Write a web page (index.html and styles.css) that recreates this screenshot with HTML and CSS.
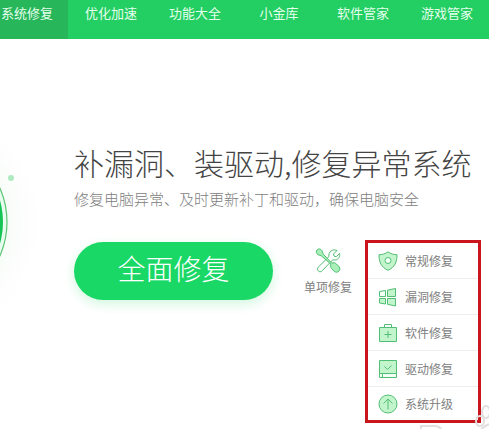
FILE: index.html
```html
<!DOCTYPE html>
<html lang="zh-CN">
<head>
    <meta charset="UTF-8">
    <meta name="viewport" content="width=device-width, initial-scale=1.0">
    <title>系统修复</title>
    <link rel="stylesheet" href="styles.css">
</head>
<body>

    <nav class="nav">
        <a class="nav-item active" href="#">系统修复</a>
        <a class="nav-item" href="#">优化加速</a>
        <a class="nav-item" href="#">功能大全</a>
        <a class="nav-item" href="#">小金库</a>
        <a class="nav-item" href="#">软件管家</a>
        <a class="nav-item" href="#">游戏管家</a>
    </nav>

    <main class="hero">
        <svg class="dial" width="74" height="220" viewBox="0 0 74 220" aria-hidden="true">
            <defs>
                <radialGradient id="halo">
                    <stop offset="0.7" stop-color="#f7fdf9"/>
                    <stop offset="0.85" stop-color="#fcfdfc"/>
                    <stop offset="1" stop-color="#ffffff"/>
                </radialGradient>
            </defs>
            <circle cx="-77" cy="102" r="118" fill="url(#halo)"/>
            <circle cx="-77" cy="102" r="84" fill="#e9fcf0" stroke="#5cc474" stroke-width="1.2"/>
            <circle cx="-77" cy="102" r="80" fill="#14c455"/>
            <circle cx="11" cy="58" r="3" fill="#aeeac0"/>
        </svg>

        <div class="content">
            <h1 class="title">补漏洞、装驱动,修复异常系统</h1>
            <p class="subtitle">修复电脑异常、及时更新补丁和驱动，确保电脑安全</p>

            <div class="actions">
                <button class="btn-repair" type="button">全面修复</button>

                <button class="btn-single" type="button">
                    <svg width="26" height="26" viewBox="0 0 26 26" fill="none" stroke="#4fbd70" stroke-linejoin="round">
                        <path d="M22 2.5 18.5 6l.6 2.2 2.3.5 3.2-3.4c.7 3-1 6.300-4.300 6.700-1 .1-1.800 0-2.500-.3L7.300 22.700c-2.600 2.800-6.500-.6-4-3.600L14 8.500C13 4 17.500.5 22 2.500z"/>
                        <path d="M2.200 1.700C3.500.4 5.800.8 6.800 2.400l1.500 3.800 8.500 9c1.500-.8 3.500-.4 4.700.8l2.600 2.800c2.400 3-1.600 7.200-4.800 4.600l-2.700-2.800c-1.200-1.300-1.500-3-.7-4.500L6.500 8 3.200 6.700C1.200 5.800.8 3.200 2.200 1.700z" fill="#a8efb9"/>
                    </svg>
                    <span>单项修复</span>
                </button>

                <ul class="menu">
                    <li>
                        <a class="menu-item" href="#">
                            <svg class="icon" viewBox="0 0 20 20">
                                <path d="M10 .8C7.500 2.700 4.500 3.700 1 3.700 .8 11 3.500 16.500 10 19.300 16.500 16.500 19.200 11 19 3.700 15.500 3.700 12.500 2.700 10 .8z"/>
                                <circle class="light" cx="10" cy="9.500" r="3"/>
                            </svg>
                            常规修复
                        </a>
                    </li>
                    <li>
                        <a class="menu-item" href="#">
                            <svg class="icon" viewBox="0 0 20 20">
                                <path class="light" d="M1.500 4.500 7.500 3.500V9.500h-6z"/>
                                <path d="M9.500 3.200 17.500 1.500V9.500h-8zM1.500 11.500h6v5.500l-6-1zM9.500 11.500h8v7.500l-8-1.700z"/>
                            </svg>
                            漏洞修复
                        </a>
                    </li>
                    <li>
                        <a class="menu-item" href="#">
                            <svg class="icon" viewBox="0 0 20 20">
                                <path class="hollow" d="M6.500 4.500v-3h7v3"/>
                                <path d="M1.500 4.500h17v14h-17z"/>
                                <path d="M6.500 11.500h7M10 8v7"/>
                            </svg>
                            软件修复
                        </a>
                    </li>
                    <li>
                        <a class="menu-item" href="#">
                            <svg class="icon" viewBox="0 0 20 20">
                                <path d="M1.500 1.500h17v13h-17z"/>
                                <path class="light" d="M1.500 14.500h17v4h-17zM4.500 14.500v4"/>
                                <path class="hollow" d="M6.500 7.500 9.500 10.500 13.500 6.500"/>
                            </svg>
                            驱动修复
                        </a>
                    </li>
                    <li>
                        <a class="menu-item" href="#">
                            <svg class="icon" viewBox="0 0 20 20">
                                <circle cx="10" cy="10" r="9"/>
                                <path class="hollow" d="M10 15.500V5M5.500 9.500 10 5l4.500 4.500"/>
                            </svg>
                            系统升级
                        </a>
                    </li>
                </ul>
            </div>
        </div>
    </main>

    <!-- 右下角水印 -->
    <svg class="watermark" width="72" height="24" viewBox="0 0 72 24" aria-hidden="true">
        <path d="M4 30V21h14q7 0 8 9M34 30q3-5 10-3"/>
        <ellipse cx="69" cy="7" rx="4" ry="6"/>
        <ellipse cx="63" cy="16" rx="4" ry="5"/>
        <path d="M62 28q4-8 12-9"/>
    </svg>

</body>
</html>
```
FILE: styles.css
```css
/* 全局样式 */
* {
    box-sizing: border-box;
}
body {
    margin: 0;
    background: #fff;
    color: #808080;
    font-family: "Liberation Sans", "Noto Sans CJK SC", sans-serif;
    font-size: 12px;
    overflow: hidden;
}
a {
    color: inherit;
    text-decoration: none;
}
button {
    border: 0;
    padding: 0;
    background: none;
    color: inherit;
    font-family: inherit;
    cursor: pointer;
}

/* 顶部导航 */
.nav {
    display: flex;
    margin-left: -16px;
    background: #23ce62;
}
.nav-item {
    flex: 0 0 84px;
    padding: 0 0 12px 2px;
    color: #e4ffed;
    font-size: 13px;
    line-height: 27px;
    text-align: center;
}
.nav-item.active {
    background: #27b65a;
}

/* 主区域 */
.hero {
    display: grid;
    grid-template-columns: 74px 1fr;
    padding-top: 81px;
}
.dial {
    overflow: hidden;
}
.content {
    padding-top: 20px;
}
.title {
    margin: 0;
    color: #444;
    font-family: "Noto Sans CJK SC", sans-serif;
    font-size: 30px;
    font-weight: 300;
    line-height: 44px;
    white-space: nowrap;
}
.subtitle {
    margin: 4px 0 0;
    font-size: 15px;
    font-weight: 300;
    line-height: 24px;
    white-space: nowrap;
}

/* 操作区 */
.actions {
    display: flex;
    align-items: flex-start;
    margin-top: 28px;
}
.btn-repair {
    width: 199px;
    height: 58px;
    margin-top: 2px;
    border-radius: 29px;
    background: #19d865;
    box-shadow: 0 4px 12px rgba(25, 216, 101, 0.2);
    color: #fff;
    font-size: 28px;
    font-weight: 300;
    line-height: 56px;
}
.btn-single {
    display: flex;
    flex-direction: column;
    align-items: center;
    gap: 4px;
    margin: 8px 13px 0 31px;
    font-size: 12px;
    line-height: 20px;
}

/* 单项修复菜单 */
.menu {
    width: 116px;
    margin: 0;
    padding: 0;
    border: 3px solid #c8161c;
    list-style: none;
}
.menu li + li {
    border-top: 1px solid #eee;
}
.menu-item {
    display: flex;
    align-items: center;
    gap: 7px;
    height: 35px;
    padding-left: 10px;
}
.menu li:last-child .menu-item {
    height: 33px;
}
.icon {
    width: 20px;
    height: 20px;
    fill: #c3f5cd;
    stroke: #52bd74;
}
.icon .hollow {
    fill: none;
}
.icon .light {
    fill: #f2fff5;
}

/* 水印 */
.watermark {
    position: absolute;
    right: 0;
    bottom: 0;
    overflow: hidden;
    fill: none;
    stroke: #e3dfdf;
    stroke-width: 2;
}
```
